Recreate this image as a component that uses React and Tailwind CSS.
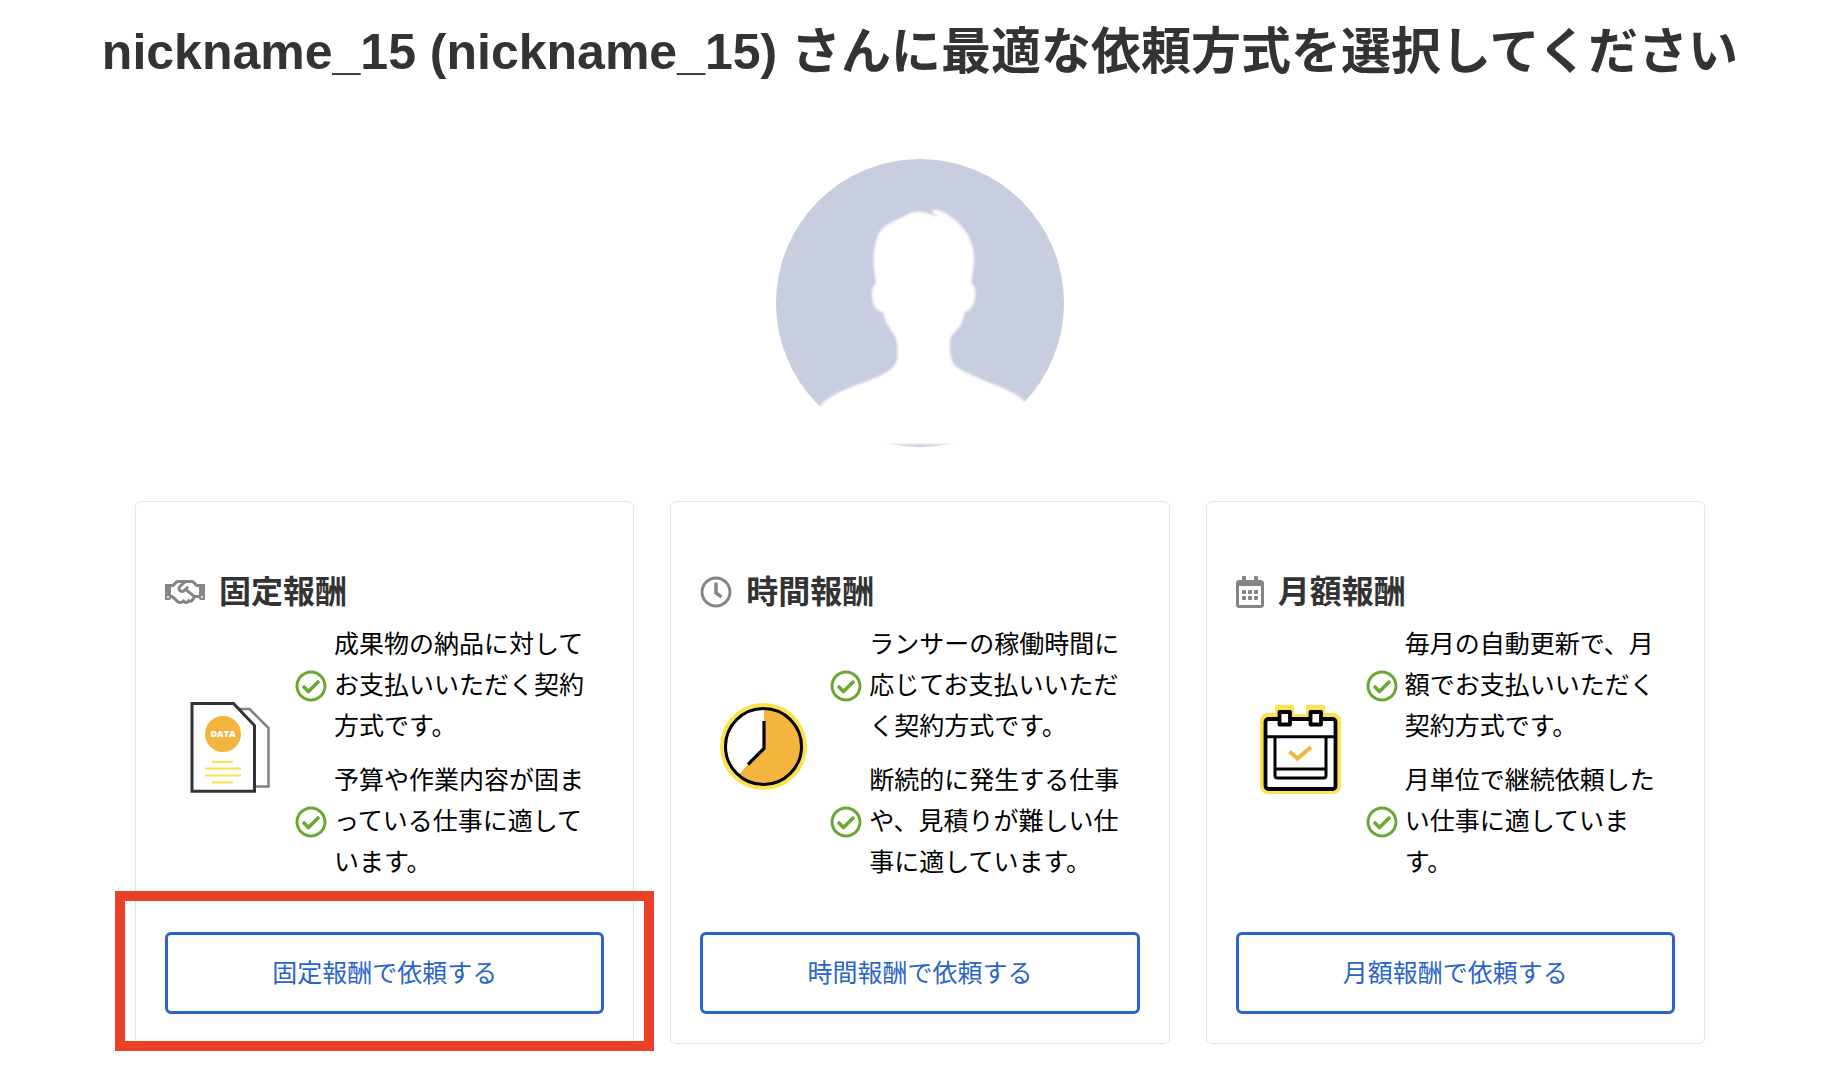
import { FaRegHandshake, FaRegClock, FaRegCalendarAlt, FaRegCheckCircle } from "react-icons/fa";

function DocumentArt() {
  return (
    <svg viewBox="180 704 100 100" className="size-[100px] overflow-visible" aria-hidden="true">
      <path d="M238 709h11.500l19 19V786.500h-20" fill="#fff" stroke="#808080" strokeWidth="2.500" />
      <path d="M192 703.500h41.500L254.500 725.500V791.200H192z" fill="#fff" stroke="#333" strokeWidth="3" />
      <circle cx="223" cy="734" r="18" fill="#f4b53f" />
      <text x="223" y="737" textAnchor="middle" fontSize="9" fontWeight="800" fill="#fff" fontFamily="Open Sans, sans-serif">DATA</text>
      <path d="M213 762h19M206 768.700h34M206 775.500h34M213 782.300h19" stroke="#fbe24f" strokeWidth="2.200" strokeLinecap="round" />
    </svg>
  );
}

function PieClockArt() {
  return (
    <svg viewBox="715 704 100 100" className="size-[100px] overflow-visible" aria-hidden="true">
      <circle cx="763.500" cy="746.500" r="43.500" fill="#fbe24f" />
      <circle cx="763.500" cy="746.500" r="38" fill="#fff" />
      <path d="M764 708.500V746.500L739 774.500A38 38 0 1 0 764 708.500z" fill="#f4b53f" />
      <circle cx="763.500" cy="746.500" r="38" fill="none" stroke="#000" strokeWidth="3" />
      <path d="M764 721V748.500L748 764.500" fill="none" stroke="#000" strokeWidth="3.200" />
    </svg>
  );
}

function CalendarArt() {
  return (
    <svg viewBox="1251 704 100 100" className="size-[100px] overflow-visible" aria-hidden="true">
      <path d="M1277 705h15a2 2 0 0 1 2 2v7h12v-7a2 2 0 0 1 2 -2h15a2 2 0 0 1 2 2v6h8a8 8 0 0 1 8 8v65a8 8 0 0 1 -8 8h-65a8 8 0 0 1 -8 -8v-65a8 8 0 0 1 8 -8h7v-6a2 2 0 0 1 2 -2z" fill="#fbe24f" />
      <rect x="1265.500" y="719" width="70" height="70" rx="3" fill="#fff" stroke="#000" strokeWidth="3.800" />
      <path d="M1265 736.800h71M1275 737v38.500a2.500 2.500 0 0 0 2.500 2.500h46a2.500 2.500 0 0 0 2.500 -2.500V737M1275 769h51" fill="none" stroke="#000" strokeWidth="3" />
      <rect x="1279.500" y="712" width="10.500" height="12.500" fill="#fff" stroke="#000" strokeWidth="3.800" strokeLinejoin="round" />
      <rect x="1310.500" y="712" width="10.500" height="12.500" fill="#fff" stroke="#000" strokeWidth="3.800" strokeLinejoin="round" />
      <path d="M1289.500 751.500l8 7L1311 747" fill="none" stroke="#f4b53f" strokeWidth="4" />
    </svg>
  );
}

function Avatar() {
  return (
    <svg viewBox="48 57 864 864" className="mx-auto size-72" role="img" aria-label="nickname_15">
      <defs>
        <filter id="avatar-soft">
          <feGaussianBlur stdDeviation="2.500" />
        </filter>
      </defs>
      <circle cx="480" cy="489" r="432" fill="#c8cde0" />
      <path
        filter="url(#avatar-soft)"
        fill="#fff"
        d="M20 913V840H160C172 796 200 772 260 747C330 717 412 700 412 650V625C415 580 385 580 369 517C350 513 336 495 336 465C336 445 340 436 348 430C344 400 341 380 341 355C343 320 348 290 362 272C385 245 420 238 450 220C470 212 490 214 535 231C525 222 515 215 516 210C545 208 560 220 590 244C620 272 641 310 642 352C641 380 638 400 634 430C643 436 646 446 646 462C645 490 636 510 614 517C602 585 570 570 570 610C570 640 572 670 595 685C640 712 700 730 745 752C775 766 788 775 800 795V840H940V913Z"
      />
    </svg>
  );
}

const plans = [
  {
    name: "固定報酬",
    Icon: FaRegHandshake,
    iconClass: "h-8 w-10",
    Art: DocumentArt,
    points: ["成果物の納品に対してお支払いいただく契約方式です。", "予算や作業内容が固まっている仕事に適しています。"],
    highlighted: true,
  },
  {
    name: "時間報酬",
    Icon: FaRegClock,
    iconClass: "h-8 w-8",
    Art: PieClockArt,
    points: ["ランサーの稼働時間に応じてお支払いいただく契約方式です。", "断続的に発生する仕事や、見積りが難しい仕事に適しています。"],
  },
  {
    name: "月額報酬",
    Icon: FaRegCalendarAlt,
    iconClass: "h-8 w-7",
    Art: CalendarArt,
    points: ["毎月の自動更新で、月額でお支払いいただく契約方式です。", "月単位で継続依頼したい仕事に適しています。"],
  },
];

function PlanCard({ name, Icon, iconClass, Art, points, highlighted }) {
  return (
    <section className="relative flex flex-col rounded-md border border-[#e5e5e5] px-[29px] pt-[66px] pb-[29px]">
      <h2 className="flex items-center gap-[14px] text-[32px] leading-[48px] font-bold text-[#333]">
        <Icon className={`${iconClass} shrink-0 text-[#858585]`} aria-hidden="true" />
        {name}
      </h2>
      <div className="mt-2 flex items-center">
        <div className="flex w-[130px] shrink-0 justify-center">
          <Art />
        </div>
        <ul className="flex flex-1 flex-col gap-[13px] pr-4">
          {points.map((point) => (
            <li key={point} className="flex items-center gap-[7px]">
              <FaRegCheckCircle className="size-8 shrink-0 text-[#6aa832]" aria-hidden="true" />
              <p className="text-[25px] leading-[41px] break-all text-black">{point}</p>
            </li>
          ))}
        </ul>
      </div>
      <button type="button" className="mt-[49px] h-[82px] rounded-md border-3 border-[#2965c8] pt-px text-[25px] text-[#2965c8]">
        {name}で依頼する
      </button>
      {highlighted && <div className="pointer-events-none absolute -inset-x-[21px] -bottom-2 h-40 border-10 border-[#ea4025]" />}
    </section>
  );
}

export default function App() {
  return (
    <main className="bg-white pr-[137px] pb-6 pl-[135px] font-['Liberation_Sans','Noto_Sans_CJK_JP',sans-serif]">
      <h1 className="-mx-[135px] pt-[14px] pb-[69px] text-center text-[50px] leading-[76px] font-bold text-[#333]">
        nickname_15 (nickname_15) さんに最適な依頼方式を選択してください
      </h1>
      <Avatar />
      <div className="mt-[54px] grid grid-cols-3 gap-9">
        {plans.map((plan) => (
          <PlanCard key={plan.name} {...plan} />
        ))}
      </div>
    </main>
  );
}
